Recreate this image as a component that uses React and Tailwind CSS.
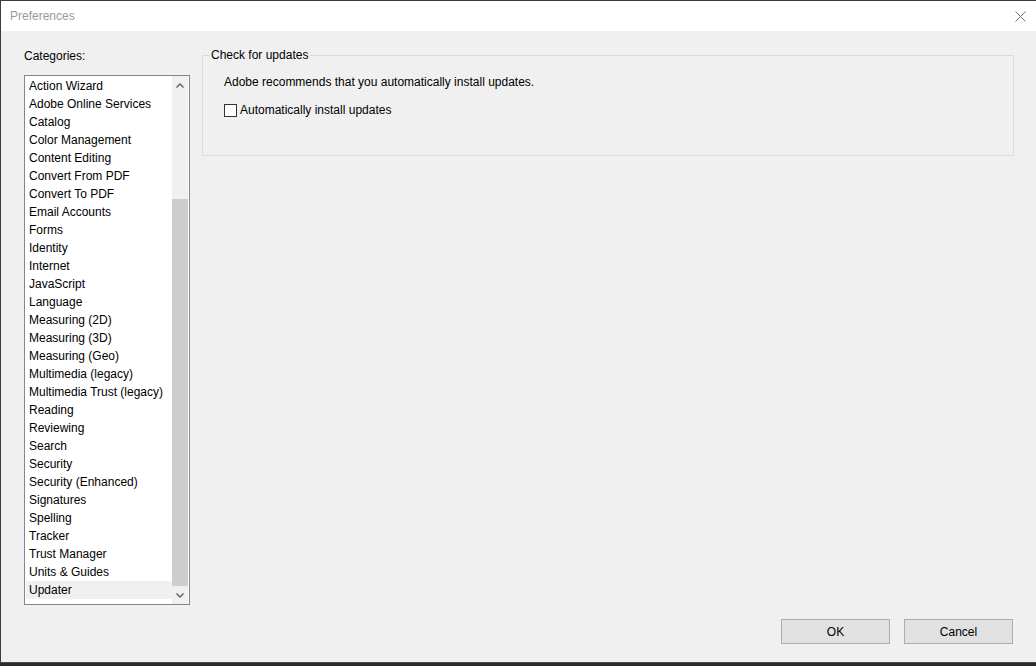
const categories = [
  'Action Wizard',
  'Adobe Online Services',
  'Catalog',
  'Color Management',
  'Content Editing',
  'Convert From PDF',
  'Convert To PDF',
  'Email Accounts',
  'Forms',
  'Identity',
  'Internet',
  'JavaScript',
  'Language',
  'Measuring (2D)',
  'Measuring (3D)',
  'Measuring (Geo)',
  'Multimedia (legacy)',
  'Multimedia Trust (legacy)',
  'Reading',
  'Reviewing',
  'Search',
  'Security',
  'Security (Enhanced)',
  'Signatures',
  'Spelling',
  'Tracker',
  'Trust Manager',
  'Units & Guides',
  'Updater',
];

const font = { fontFamily: '"Liberation Sans", Arial, sans-serif' };

const CloseIcon = () => (
  <svg width="11" height="11" viewBox="0 0 11 11" className="block">
    <path d="M0.5 0.5 L10.5 10.5 M10.5 0.5 L0.5 10.5" stroke="#6f6f6f" strokeWidth="1" fill="none" />
  </svg>
);

const Chevron = ({ up }) => (
  <svg width="8" height="5" viewBox="0 0 8 5" className="block">
    <path
      d={up ? 'M0.5 4.5 L4 1 L7.5 4.5' : 'M0.5 0.5 L4 4 L7.5 0.5'}
      stroke="#606060"
      strokeWidth="1.4"
      fill="none"
    />
  </svg>
);

const CategoryList = ({ selected }) => (
  <div className="w-[166px] h-[530px] border border-[#828790] bg-white flex">
    <div className="flex-1 pt-px pl-px">
      {categories.map((c) => (
        <div
          key={c}
          className={`h-[18px] leading-[18px] pl-[3px] text-[12px] text-black whitespace-nowrap ${
            c === selected ? 'bg-[#f0f0f0]' : ''
          }`}
        >
          {c}
        </div>
      ))}
    </div>
    <div className="w-[16px] bg-[#f0f0f0] flex flex-col mr-px">
      <div className="h-[17px] flex items-center justify-center pt-[2px]">
        <Chevron up />
      </div>
      <div className="h-[106px]" />
      <div className="flex-1 bg-[#cdcdcd]" />
      <div className="h-[18px] flex items-center justify-center">
        <Chevron />
      </div>
    </div>
  </div>
);

const DialogButton = ({ children }) => (
  <button className="w-[109px] h-[25px] bg-[#e1e1e1] border border-[#adadad] text-[12px] text-black leading-none">
    {children}
  </button>
);

export default function App() {
  return (
    <div className="w-[1036px] h-[666px] flex flex-col bg-[#2b2b2b] overflow-hidden" style={font}>
      <div className="flex-1 flex flex-col border-t border-l border-[#3c3c3c] bg-[#f0f0f0]">
        {/* Title bar */}
        <div className="h-[30px] bg-white flex items-center justify-between pl-[9px] pr-[10px]">
          <span className="text-[12px] text-[#999999]">Preferences</span>
          <CloseIcon />
        </div>

        {/* Body */}
        <div className="flex-1 flex flex-col">
          <div className="flex pt-[16px] pl-[23px]">
            <div className="flex flex-col">
              <div className="h-[18px] leading-[18px] text-[12px] text-black mb-[10px]">Categories:</div>
              <CategoryList selected="Updater" />
            </div>

            <fieldset className="ml-[12px] w-[812px] border border-[#dcdcdc] pb-[36px] self-start -mt-[1px]">
              <legend className="text-[12px] leading-[18px] text-black px-[2px] ml-[6px]">Check for updates</legend>
              <div className="pl-[21px]">
                <div className="mt-[9px] text-[12px] leading-[18px] text-black">
                  Adobe recommends that you automatically install updates.
                </div>
                <label className="mt-[10px] flex items-center gap-[3px] h-[18px] text-[12px] text-black">
                  <span className="w-[13px] h-[13px] border border-[#333333] bg-white" />
                  <span className="leading-[18px]">Automatically install updates</span>
                </label>
              </div>
            </fieldset>
          </div>

          <div className="mt-auto flex justify-end gap-[14px] pr-[23px] pb-[18px]">
            <DialogButton>OK</DialogButton>
            <DialogButton>Cancel</DialogButton>
          </div>
        </div>
      </div>
      <div className="h-[4px] bg-[#2b2b2b] border-t border-[#4a4a4a]" />
    </div>
  );
}
